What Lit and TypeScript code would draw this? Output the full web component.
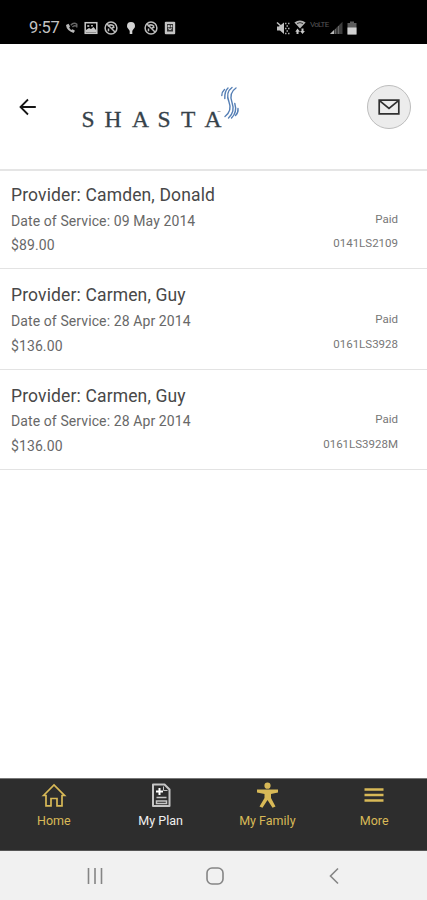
import { LitElement, html, css, svg } from "lit";
import { customElement } from "lit/decorators.js";

interface Claim {
  provider: string;
  date: string;
  amount: string;
  status: string;
  id: string;
}

const claims: Claim[] = [
  { provider: "Camden, Donald", date: "09 May 2014", amount: "$89.00", status: "Paid", id: "0141LS2109" },
  { provider: "Carmen, Guy", date: "28 Apr 2014", amount: "$136.00", status: "Paid", id: "0161LS3928" },
  { provider: "Carmen, Guy", date: "28 Apr 2014", amount: "$136.00", status: "Paid", id: "0161LS3928M" },
];

@customElement("status-bar")
class StatusBar extends LitElement {
  static styles = css`
    :host { display: flex; height: 44px; box-sizing: border-box; padding: 11px 70px 0 29px; background: #000; color: #c4c4c4; justify-content: space-between; }
    .group { display: flex; align-items: center; height: 33px; }
    .left { gap: 6px; }
    .left svg { margin-left: -0.3px; }
    .time { font: 16.5px/33px Roboto, sans-serif; width: 30px; letter-spacing: -0.35px; }
    .right { gap: 4px; }
    .carrier { font: 8px/10px Roboto, sans-serif; color: #555; width: 16px; height: 15px; letter-spacing: -0.7px; }
    svg { display: block; }
  `;
  render() {
    const blocked = html`<svg width="14" height="14" viewBox="0 0 14 14" fill="none" stroke="#bdbdbd" stroke-width="1.5">
      <circle cx="7" cy="7" r="5.9" /><path d="M3.8 5.4q3-3 6.2 0M3 3l8 8M4.500 7.500v2.800M8 7l2.500-1" /></svg>`;
    return html`
      <div class="group left">
        <span class="time">9:57</span>
        <svg width="14" height="14" viewBox="0 0 14 14" fill="none" stroke="#a8a8a8" stroke-width="1.4">
          <path d="M1 4Q1.500 9.500 8.500 12l1.500-2.300-2.400-1.500-1.500.8L4.200 6.800l.8-1.500L3.500 2.800Z" fill="#b8b8b8" stroke="none" />
          <path d="M5.800 4.200Q8.500 1 12 3.300M7.400 6Q9.200 4 11.400 5.200M11.800 2.800v3.600" stroke="#666" />
        </svg>
        <svg width="14" height="14" viewBox="0 0 14 14">
          <rect x="1.200" y="1.700" width="11.600" height="10.600" fill="none" stroke="#c8c8c8" stroke-width="1.500" />
          <path d="M2 11.500V9l3-2 2 1 2.500-2L12 9v2.500Z" fill="#c8c8c8" /><path d="M3.300 4h2v2h-2zM7 4h2v1.400H7z" fill="#aaa" />
        </svg>
        ${blocked}
        <svg width="14" height="14" viewBox="0 0 14 14"><path d="M7 1a4.100 4.100 0 0 1 4 4.200C11 7.400 8.600 8.300 8.300 10v3H5.700v-3C5.400 8.300 3 7.400 3 5.200A4.100 4.100 0 0 1 7 1Z" fill="#d4d4d4" /></svg>
        ${blocked}
        <svg width="14" height="14" viewBox="0 0 14 14">
          <rect x="1.800" y=".8" width="10.400" height="12.400" rx="1" fill="#c4c4c4" />
          <rect x="4" y="3" width="6" height="7.500" fill="#353535" /><path d="M5 4.500h1.500v1.400H5zM8 4.500h1v1.400H8zM5 7.500l2 1.300 2-1.300" fill="#ccc" stroke="#ccc" stroke-width=".8" />
        </svg>
      </div>
      <div class="group right">
        <svg width="14" height="14" viewBox="0 0 14 14">
          <path d="M1 5.500h2l5-4v11.500l-4-3.500H1Z" fill="#c2c2c2" />
          <path d="M1 1.500l4.500 4" stroke="#c2c2c2" stroke-width="1.500" /><path d="M9 2.500h1.500M12 2.500h1.500M10.500 5h1.500M9 7.500h1.500M12 7.500h1.500M10.500 10h1.500M9 12.500h1.500M12 12.500h1.500" stroke="#aaa" stroke-width="1.600" />
        </svg>
        <svg width="12" height="15" viewBox="0 0 12 15">
          <path d="M.4 2.500Q6-1.500 11.600 2.500L6 8.500Z" fill="#b5b5b5" /><path d="M3 3.500q3-1.800 6 0" stroke="#333" fill="none" />
          <path d="M3.500 8.500 6 11.700H4.500V14h-2v-2.300H1.300ZM8.500 14l-2.400-3h1.400V8.500h2V11h1.400Z" fill="#c8c8c8" />
        </svg>
        <span class="carrier">VoLTE</span>
        <svg width="13" height="13" viewBox="0 0 13 13"><path d="M0 13 12.500.8V13Z" fill="#3d3d3d" /><path d="M0 13l4-4v4Z" fill="#bbb" /><path d="M5.500 8v5M8.500 5v8" stroke="#666" /></svg>
        <svg width="10" height="14" viewBox="0 0 10 14"><path d="M3 .5h4V2h2.500v11.500H.5V2H3Z" fill="#5c5c5c" /><path d="M.5 6.500h9v7h-9Z" fill="#d2d2d2" /></svg>
      </div>`;
  }
}

@customElement("app-header")
class AppHeader extends LitElement {
  static styles = css`
    :host { display: flex; align-items: center; height: 127px; box-sizing: border-box; border-bottom: 2px solid #e5e5e5; padding: 0 16px 0 19px; background: #fff; }
    .back { width: 18px; height: 18px; margin-top: 1px; }
    .logo { width: 164px; height: 54px; margin: 0 auto 0 43px; }
    .word { font: 23.5px "Liberation Serif", serif; fill: #36424a; stroke: #36424a; stroke-width: .3px; }
    .mail { width: 44px; height: 44px; box-sizing: border-box; border: 1px solid #bdbdbd; border-radius: 50%; background: #ececec; display: grid; place-items: center; }
    svg { display: block; }
  `;
  render() {
    const letters: [string, number][] = [["S", 81.5], ["H", 104.5], ["A", 132], ["S", 157.5], ["T", 181], ["A", 204.5]];
    return html`
      <svg class="back" viewBox="0 0 18 18" fill="none" stroke="#161616" stroke-width="1.8"><path d="M16.800 9H2M9 1.500 1.500 9 9 16.500" /></svg>
      <svg class="logo" viewBox="80 80 164 54">
        ${letters.map(([c, x]) => svg`<text class="word" x=${x} y="126.500">${c}</text>`)}
        <path d="M217.500 111.500h3" stroke="#8a9298" stroke-width=".8" />
        <g fill="none" stroke="#557fb5" stroke-width="1.400" stroke-linecap="round">
          <path d="M224.500 89.500Q221.800 92 221.800 95.500" />
          <path d="M228 88Q224.500 91 224.800 98.500" />
          <path d="M232 87.500C226.500 91.500 227 97 229 102S230 112.500 225 116.500" />
          <path d="M236 88C230 92 230 97 232 102.500S233 114 228.500 118" />
          <path d="M234.800 103.500C236.500 109 235.500 114 231.500 118" />
          <path d="M238 108.500Q238.500 112.500 235.500 115.500" />
        </g>
      </svg>
      <div class="mail">
        <svg width="22" height="16" viewBox="0 0 22 16" fill="none" stroke="#303030" stroke-width="1.700"><path d="M1.200 1.200h19.600v13.600H1.200ZM1.500 1.700 11 9.500l9.500-7.800" /></svg>
      </div>`;
  }
}

@customElement("claim-row")
class ClaimRow extends LitElement {
  static properties = { claim: { attribute: false } };
  declare claim: Claim;
  static styles = css`
    :host { display: flex; justify-content: space-between; height: 100.3px; box-sizing: border-box; border-bottom: 1.500px solid #e3e3e3; padding: 13px 29px 0 11px; font-family: Roboto, sans-serif; color: #686868; white-space: nowrap; }
    .provider { font-size: 17.5px; line-height: 26.5px; color: #484848; letter-spacing: .14px; }
    .date, .amount { font-size: 14px; line-height: 24.7px; letter-spacing: .1px; }
    .side { text-align: right; padding-top: 24.5px; font-size: 11.5px; line-height: 24.7px; letter-spacing: 0; color: #777; }
  `;
  render() {
    const c = this.claim;
    return html`
      <div>
        <div class="provider">Provider: ${c.provider}</div>
        <div class="date">Date of Service: ${c.date}</div>
        <div class="amount">${c.amount}</div>
      </div>
      <div class="side"><div>${c.status}</div><div>${c.id}</div></div>`;
  }
}

@customElement("tab-bar")
class TabBar extends LitElement {
  static styles = css`
    :host { display: grid; grid-template-columns: repeat(4, 1fr); height: 73px; box-sizing: border-box; border-top: 1px solid #777; border-bottom: 1px solid #555; background: #2d2d2d; color: #d8b957; font: 12.5px/18px Roboto, sans-serif; }
    .tab { display: flex; flex-direction: column; align-items: center; padding: 3px 0 0 1px; gap: 3px; }
    .active { color: #f0f0f0; }
    svg { display: block; width: 26px; height: 27px; }
  `;
  render() {
    return html`
      <div class="tab">
        <svg viewBox="0 0 26 27" fill="none" stroke="currentColor" stroke-width="1.700"><path d="M2.500 13.500 13 3 23.500 13.500H21v10.300h-5v-7.300h-6v7.300H5V13.500Z" /></svg>
        <span>Home</span>
      </div>
      <div class="tab active">
        <svg viewBox="0 0 26 27" fill="none" stroke="#c5c5c5" stroke-width="2"><path d="M5 2.500h11.500l5 5V24H5Z" stroke-linejoin="round" /><path d="M8 9.500h7M11.500 6v7" stroke="#fff" /><path d="M8.500 15.500h10M8.500 19h10v2.500h-10Z" stroke-width="1.500" /><path d="M15.500 4.500v4h4" stroke-width="1" /></svg>
        <span>My Plan</span>
      </div>
      <div class="tab">
        <svg viewBox="0 0 26 27" fill="currentColor"><circle cx="13.500" cy="3.700" r="3.100" /><path d="M3 7.500h21v3l-7 1.500v4l4.500 8.500-3 1.200L13.500 18l-5 7.700-3-1.200L10.500 16v-4L3 10.500Z" /></svg>
        <span>My Family</span>
      </div>
      <div class="tab">
        <svg viewBox="0 0 26 27" stroke="currentColor" stroke-width="2.700"><path d="M3.500 7.500h19M3.500 13h19M3.500 18.500h19" /></svg>
        <span>More</span>
      </div>`;
  }
}

@customElement("system-nav")
class SystemNav extends LitElement {
  static styles = css`
    :host { display: flex; justify-content: space-between; align-items: center; height: 49px; box-sizing: border-box; padding: 1px 83px 0 85px; background: #f1f1f1; }
    svg { display: block; width: 20px; height: 20px; fill: none; stroke: #858585; stroke-width: 1.6px; }
  `;
  render() {
    return html`
      <svg viewBox="0 0 20 20"><path d="M3.500 2v16M10 2v16M16.500 2v16" /></svg>
      <svg viewBox="0 0 20 20"><rect x="2" y="2" width="16" height="16" rx="5" /></svg>
      <svg viewBox="0 0 20 20"><path d="M14 2.500 6.500 10l7.500 7.500" /></svg>`;
  }
}

@customElement("app-root")
class AppRoot extends LitElement {
  static styles = css`
    :host { display: flex; flex-direction: column; height: 900px; background: #fff; overflow: hidden; }
    .list { flex: 1; margin-top: -2px; }
  `;
  render() {
    return html`
      <status-bar></status-bar>
      <app-header></app-header>
      <main class="list">${claims.map((c) => html`<claim-row .claim=${c}></claim-row>`)}</main>
      <tab-bar></tab-bar>
      <system-nav></system-nav>`;
  }
}
